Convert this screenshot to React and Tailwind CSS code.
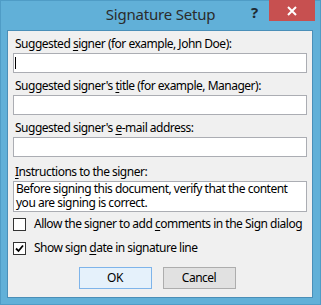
export default function App() {
  const font = { fontFamily: '"Noto Sans", "Open Sans", sans-serif' };
  const U = ({ children }) => <span className="underline underline-offset-2">{children}</span>;
  return (
    <div
      className="w-[321px] h-[305px] bg-[#61b0d8] border border-[#4f9cc6] flex flex-col text-black"
      style={font}
    >
      <div className="h-[29px] flex items-start relative">
        <div className="absolute left-0 right-0 top-[2px] text-center text-[15px] text-[#2b2b2b] leading-[22px] tracking-[-0.2px]">
          Signature Setup
        </div>
        <div className="absolute left-[250px] top-[1px] text-[15px] font-bold text-[#1e2a33] leading-[20px]">?</div>
        <div className="absolute left-[268px] top-[-1px] w-[46px] h-[21px] bg-[#c75050] flex items-center justify-center">
          <svg width="10" height="10" viewBox="0 0 10 10">
            <path d="M1 1 L9 9 M9 1 L1 9" stroke="white" strokeWidth="2" />
          </svg>
        </div>
      </div>
      <div className="ml-[6px] w-[306px] h-[268px] border border-[#4a8fb8] bg-[#f0f0f0] flex flex-col pt-[5px] px-[5px] text-[12px] tracking-[-0.5px] whitespace-nowrap">
        <div className="h-4 leading-4 pl-[2px]">Suggested <U>s</U>igner (for example, John Doe):</div>
        <div className="mt-[1px] h-[20px] w-[294px] bg-white border border-[#abadb3] flex items-center pl-[1px]">
          <div className="w-[1px] h-[12px] bg-black" />
        </div>
        <div className="mt-[5px] h-4 leading-4 pl-[2px]">Suggested signer's <U>t</U>itle (for example, Manager):</div>
        <div className="mt-[1px] h-[20px] w-[294px] bg-white border border-[#abadb3]" />
        <div className="mt-[5px] h-4 leading-4 pl-[2px]">Suggested signer's <U>e</U>-mail address:</div>
        <div className="mt-[1px] h-[20px] w-[294px] bg-white border border-[#abadb3]" />
        <div className="mt-[7px] h-4 leading-4 pl-[2px]"><U>I</U>nstructions to the signer:</div>
        <div className="mt-[1px] h-[31px] w-[294px] bg-white border border-[#abadb3] px-[2px] leading-[14px] pt-[0px]">
          Before signing this document, verify that the content
          <br />
          you are signing is correct.
        </div>
        <div className="mt-[5px] flex items-center h-[14px]">
          <div className="w-[13px] h-[13px] border border-[#333] bg-white shrink-0" />
          <div className="ml-[8px] leading-4">Allow the signer to add <U>c</U>omments in the Sign dialog</div>
        </div>
        <div className="mt-[10px] flex items-center h-[14px]">
          <div className="w-[13px] h-[13px] border border-[#333] bg-white flex items-center justify-center shrink-0">
            <svg width="9" height="9" viewBox="0 0 9 9">
              <path d="M1 4.5 L3.5 7 L8 1.5" stroke="black" strokeWidth="1.8" fill="none" />
            </svg>
          </div>
          <div className="ml-[8px] leading-4">Show sign <U>d</U>ate in signature line</div>
        </div>
        <div className="mt-[12px] flex justify-center gap-[11px] pr-[6px]">
          <div className="w-[73px] h-[22px] bg-[#e5f1fb] border border-[#7eb4ea] flex items-center justify-center">OK</div>
          <div className="w-[73px] h-[22px] bg-[#e1e1e1] border border-[#adadad] flex items-center justify-center">Cancel</div>
        </div>
      </div>
    </div>
  );
}
